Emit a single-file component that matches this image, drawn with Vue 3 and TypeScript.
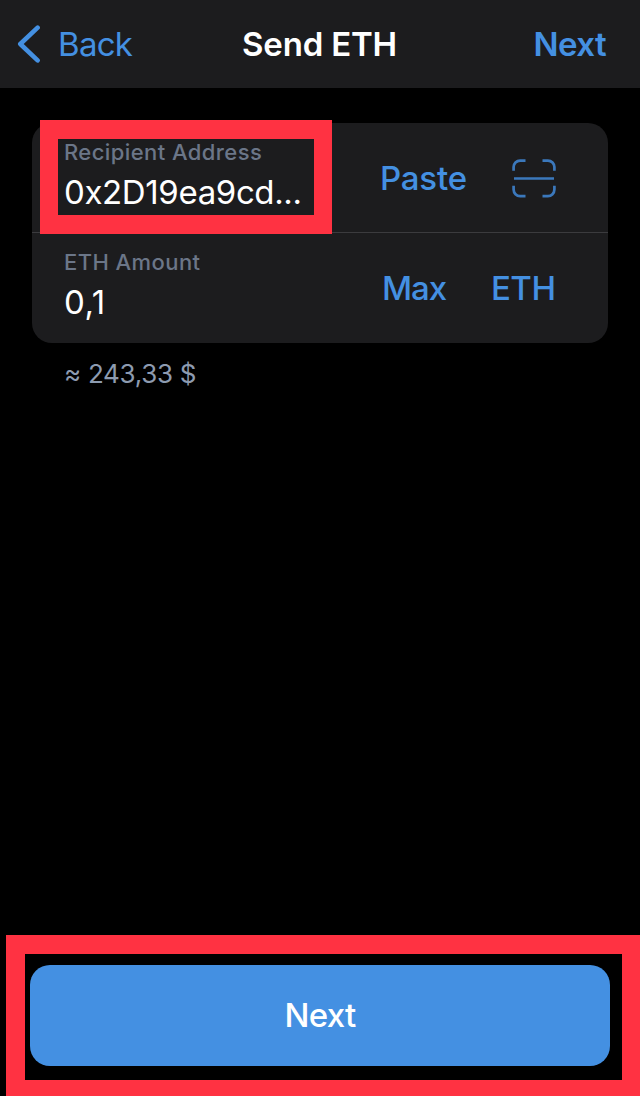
<script setup lang="ts">
import { ref } from 'vue'

const recipient = ref<string>('0x2D19ea9cd...')
const amount = ref<string>('0,1')
const fiat = ref<string>('≈ 243,33 $')
</script>

<template>
  <div class="screen">
    <header class="bar">
      <a class="back">
        <svg class="chevron" width="24" height="40" viewBox="0 0 24 40" fill="none">
          <path d="M21.6 3.7 4.3 20 21.6 36.3" stroke="currentColor" stroke-width="4.6" stroke-linecap="round" stroke-linejoin="round" />
        </svg>
        <span class="back-label">Back</span>
      </a>
      <h1 class="title">Send ETH</h1>
      <a class="bar-next">Next</a>
    </header>

    <main class="content">
      <section class="card">
        <div class="row">
          <div class="field">
            <span class="label label-recipient">Recipient Address</span>
            <span class="value value-address">{{ recipient }}</span>
          </div>
          <a class="action paste">Paste</a>
          <svg class="scan" width="44" height="40" viewBox="0 0 44 40" fill="none" stroke="currentColor" stroke-width="2.7">
            <path d="M1.6 12.7V9.1a6.5 6.5 0 0 1 6.5-6.5h5.4M30.5 2.6h5.4a6.5 6.5 0 0 1 6.5 6.5v3.6M1.6 27.7v3.9a6.5 6.5 0 0 0 6.5 6.5h5.4M30.5 38.1h5.4a6.5 6.5 0 0 0 6.5-6.5v-3.9M2 20.5h40" />
          </svg>
          <div class="highlight"></div>
        </div>
        <div class="row">
          <div class="field">
            <span class="label label-amount">ETH Amount</span>
            <span class="value value-amount">{{ amount }}</span>
          </div>
          <a class="action max">Max</a>
          <a class="action unit">ETH</a>
        </div>
      </section>
      <p class="fiat">{{ fiat }}</p>
    </main>

    <footer class="footer">
      <button class="submit" type="button"><span class="submit-label">Next</span></button>
    </footer>
  </div>
</template>

<style>
body {
  margin: 0;
  background: #000;
}
</style>

<style scoped>
.screen {
  display: flex;
  flex-direction: column;
  width: 640px;
  height: 1096px;
  overflow: hidden;
  background: #000;
  color: #fff;
  font-family: Inter, "Liberation Sans", sans-serif;
  font-size: 33px;
  white-space: nowrap;
}
.bar {
  display: grid;
  grid-template-columns: 1fr auto 1fr;
  align-items: center;
  box-sizing: border-box;
  height: 88px;
  padding: 0 33px 0 16px;
  background: #1c1c1e;
}
.back {
  display: flex;
  align-items: center;
  gap: 18px;
  color: #4490e2;
}
.back-label {
  letter-spacing: -0.7px;
}
.title {
  margin: 0 -16px 0 0;
  font-size: 33px;
  font-weight: 600;
  letter-spacing: -0.2px;
}
.bar-next {
  justify-self: end;
  margin-right: 1px;
  color: #4490e2;
  font-weight: 600;
  letter-spacing: -0.6px;
}
.content {
  flex: 1;
  padding: 35px 32px 0;
}
.card {
  height: 220px;
  border-radius: 20px;
  background: #1c1c1e;
}
.row {
  position: relative;
  display: flex;
  align-items: center;
  box-sizing: border-box;
  height: 110px;
  padding-left: 32px;
}
.row + .row {
  box-shadow: inset 0 1px 0 #3b3b3e;
  margin-top: -1px;
  height: 111px;
  padding-top: 1px;
}
.field {
  display: flex;
  flex-direction: column;
  width: 316px;
  margin-top: -12px;
}
.label {
  height: 40px;
  line-height: 40px;
  font-size: 22px;
  font-weight: 500;
  letter-spacing: 0.42px;
  color: #6b7688;
}
.value {
  height: 40px;
  line-height: 40px;
}
.value-address {
  letter-spacing: -0.37px;
}
.value-amount {
  letter-spacing: 0.6px;
}
.action {
  color: #4490e2;
  font-weight: 500;
}
.paste {
  letter-spacing: -0.2px;
}
.scan {
  margin-left: 45px;
  color: #3b78bc;
}
.max {
  margin-left: 2px;
  letter-spacing: -1.1px;
}
.unit {
  margin-left: 45px;
  letter-spacing: -0.5px;
}
.highlight {
  position: absolute;
  left: 8px;
  top: -3px;
  box-sizing: border-box;
  width: 292px;
  height: 114px;
  border: 19px solid #ff3242;
  border-left-width: 18px;
  border-right-width: 18px;
  z-index: 1;
}
.fiat {
  margin: 11px 0 0 32px;
  line-height: 40px;
  font-size: 26px;
  letter-spacing: -0.3px;
  color: #8d9bb0;
}
.footer {
  box-sizing: border-box;
  width: 634px;
  height: 161px;
  margin-left: 6px;
  padding: 11px 12px 14px 5px;
  border: solid #ff3242;
  border-width: 19px 18px 16px 19px;
}
.submit {
  display: flex;
  align-items: center;
  justify-content: center;
  width: 580px;
  height: 101px;
  padding: 0 0 2px;
  border: 0;
  border-radius: 20px;
  background: #4490e2;
  color: #fff;
  font: inherit;
  font-weight: 500;
}
.submit-label {
  letter-spacing: -0.7px;
}
</style>
